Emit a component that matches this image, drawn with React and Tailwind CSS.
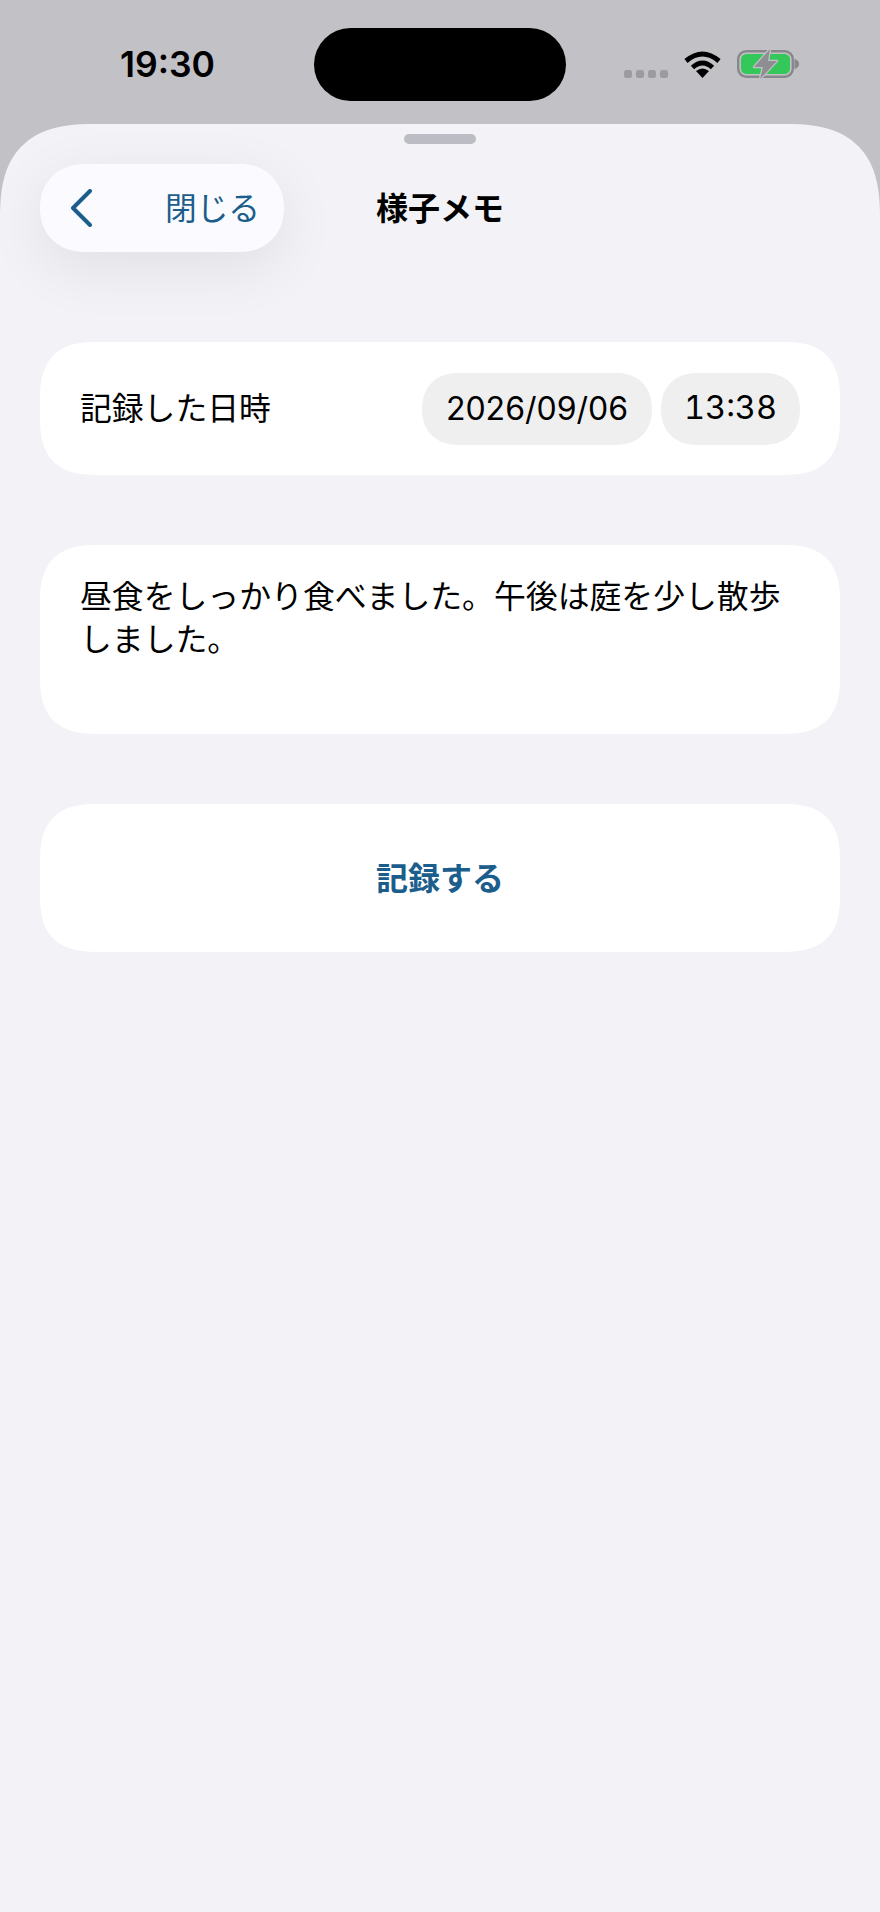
import React from 'react';

const jp = "font-['Inter','Noto_Sans_CJK_JP',sans-serif]";

function Wifi() {
    return (
        <svg width="39" height="28" viewBox="0 0 39 28" className="block">
            <path d="M3 11 Q19.5 -3 36 11" fill="none" stroke="#000" strokeWidth="5" />
            <path d="M9.5 17.5 Q19.5 8.5 29.5 17.5" fill="none" stroke="#000" strokeWidth="5" />
            <path d="M19.5 28 L13 21 Q19.5 16 26 21 Z" fill="#000" />
        </svg>
    );
}

function Battery() {
    return (
        <svg width="62" height="30" viewBox="0 0 62 30" className="block">
            <rect x="1.2" y="2.2" width="54.6" height="25.6" rx="8" fill="none" stroke="#88888c" strokeWidth="2.4" />
            <rect x="4" y="5" width="49" height="20" rx="5.5" fill="#34c759" />
            <path d="M57.5 10 C60.5 10.5 62 12.5 62 15 C62 17.5 60.5 19.5 57.5 20 Z" fill="#88888c" />
            <path d="M33 0 L17 18 L26 18 L23 30 L40 12 L31 12 Z" fill="#8e8e92" stroke="#c2c1c6" strokeWidth="2.5" strokeLinejoin="round" paintOrder="stroke" />
        </svg>
    );
}

export default function App() {
    return (
        <div className={`w-[880px] h-[1912px] flex flex-col bg-[#c2c1c6] overflow-hidden ${jp}`}>
            <div className="h-[124px] shrink-0 flex items-start">
                <div className="w-[314px] pt-[43px] pl-[120px] text-[35.5px] leading-[44px] font-semibold text-black">19:30</div>
                <div className="w-[252px] h-[73px] mt-[28px] rounded-full bg-black" />
                <div className="flex items-start pt-[50px] pl-[58px]">
                    <div className="flex gap-[4px] mt-[20px]">
                        <span className="w-[8px] h-[8px] rounded-[2.5px] bg-[#9c9ca0]" />
                        <span className="w-[8px] h-[8px] rounded-[2.5px] bg-[#9c9ca0]" />
                        <span className="w-[8px] h-[8px] rounded-[2.5px] bg-[#9c9ca0]" />
                        <span className="w-[8px] h-[8px] rounded-[2.5px] bg-[#9c9ca0]" />
                    </div>
                    <div className="ml-[15px]"><Wifi /></div>
                    <div className="ml-[15px] -mt-[1px]"><Battery /></div>
                </div>
            </div>

            <div className="flex-1 bg-[#f2f2f7] rounded-t-[95px] [corner-shape:superellipse(1.4)] px-[40px] pt-[10px]">
                <div className="w-[72px] h-[10px] mx-auto rounded-full bg-[#bcbcc4]" />

                <div className="mt-[20px] grid grid-cols-[1fr_auto_1fr] items-center">
                    <button className="w-[244px] h-[88px] rounded-[44px] [corner-shape:superellipse(1.1)] bg-[#fbfbff] shadow-[0_16px_60px_rgba(0,0,0,0.08)] flex items-center justify-between pl-[30px] pr-[24px] pt-[2px] text-[#1b5e8c] text-[31.7px]">
                        <svg width="22" height="38" viewBox="0 0 22 38" className="block -mt-[2px]">
                            <path d="M20 2 L3 19 L20 36" fill="none" stroke="#1b5e8c" strokeWidth="4" strokeLinecap="round" strokeLinejoin="round" />
                        </svg>
                        <span>閉じる</span>
                    </button>
                    <div className="pt-[2px] text-[32px] font-bold text-black">様子メモ</div>
                    <div />
                </div>

                <div className="mt-[90px] flex flex-col gap-[70px]">
                    <div className="h-[133px] rounded-[58px] [corner-shape:superellipse(1.4)] bg-white px-[40px] flex items-center justify-between">
                        <span className="text-[31.8px] text-black">記録した日時</span>
                        <div className="flex gap-[9px] text-[32px] text-black">
                            <span className="w-[230px] h-[72px] rounded-[36px] [corner-shape:superellipse(1.15)] bg-[#efefef] flex items-center justify-center">2026/09/06</span>
                            <span className="w-[139px] h-[72px] rounded-[36px] [corner-shape:superellipse(1.15)] bg-[#efefef] flex items-center justify-center tabular-nums text-[32.5px]">13:38</span>
                        </div>
                    </div>

                    <div className="h-[189px] rounded-[58px] [corner-shape:superellipse(1.4)] bg-white px-[40px] pt-[30px] text-[31.85px] leading-[43px] text-black">
                        昼食をしっかり食べました。午後は庭を少し散歩しました。
                    </div>

                    <button className="h-[148px] rounded-[58px] [corner-shape:superellipse(1.4)] bg-white flex items-center justify-center pt-[2px] text-[32px] font-bold text-[#1b5e8c]">
                        記録する
                    </button>
                </div>
            </div>
        </div>
    );
}
